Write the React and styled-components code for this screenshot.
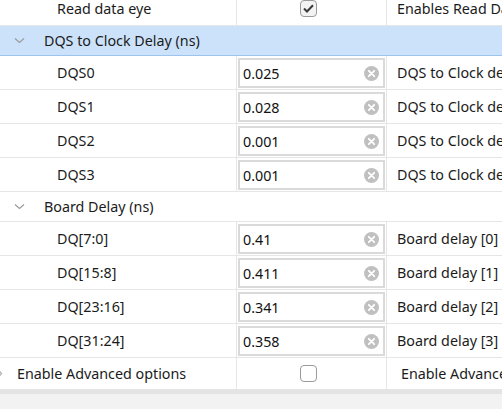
import React from 'react'
import styled, {createGlobalStyle} from 'styled-components'

const GlobalStyle = createGlobalStyle`
  html, body {
    margin: 0;
    padding: 0;
    background: #ffffff;
  }
  body {
    font-family: "Noto Sans", "Open Sans", sans-serif;
    font-size: 14.3px;
    color: #1b1b1b;
  }
`

const Page = styled.div`
  display: flex;
  flex-direction: column;
  width: 502px;
  height: 409px;
  overflow: hidden;
`

const Viewport = styled.div`
  height: 389px;
  overflow: hidden;
  flex: none;
`

const Table = styled.div`
  display: flex;
  flex-direction: column;
  margin-top: -8px;
  width: 560px;
`

const Row = styled.div`
  display: grid;
  grid-template-columns: 237px 150px 1fr;
  height: ${props => props.tall ? '34px' : '31px'};
  box-sizing: border-box;
  border-bottom: ${props => props.last ? 'none' : '1px solid #e6e6e6'};
`

const GroupRow = styled.div`
  display: flex;
  align-items: center;
  height: 30px;
  box-sizing: border-box;
  padding-left: 14px;
  gap: 19px;
  background: ${props => props.selected ? '#cce2fa' : '#ffffff'};
  border-bottom: 1px solid ${props => props.selected ? '#9dc4ef' : '#e6e6e6'};
`

const Cell = styled.div`
  display: flex;
  align-items: center;
  box-sizing: border-box;
  min-width: 0;
  white-space: nowrap;
  overflow: hidden;
  border-right: ${props => props.divider ? '1px solid #e6e6e6' : 'none'};
  padding-left: ${props => props.indent || 0}px;
  justify-content: ${props => props.center ? 'center' : 'flex-start'};
`

const ValueCell = styled(Cell)`
  padding: 2px 1px 1px 1px;
  align-items: stretch;
`

const InputBox = styled.div`
  flex: 1;
  display: flex;
  align-items: center;
  justify-content: space-between;
  box-sizing: border-box;
  border: 2px solid #dadada;
  background: #ffffff;
  padding: 0 4px 0 3px;
`

const InputText = styled.span`
  color: #111111;
`

const CheckBox = styled.div`
  width: 17px;
  height: 17px;
  box-sizing: border-box;
  border: 1.5px solid #9a9a9a;
  border-radius: 4px;
  background: ${props => props.checked ? '#f3f3f3' : '#ffffff'};
  display: flex;
  align-items: center;
  justify-content: center;
  margin-right: 6px;
`

const ChevronWrap = styled.span`
  display: flex;
  width: 11px;
  margin-left: ${props => props.offset || 0}px;
`

const Chevron = ({dir = 'down', offset}) => (
  <ChevronWrap offset={offset}>
    {dir === 'down' ? (
      <svg width="11" height="7" viewBox="0 0 11 7">
        <path d="M1 1.5 L5.5 5.5 L10 1.5" fill="none" stroke="#9b9b9b" strokeWidth="1.2" />
      </svg>
    ) : (
      <svg width="7" height="11" viewBox="0 0 7 11">
        <path d="M1.5 1 L5.5 5.5 L1.5 10" fill="none" stroke="#b5b5b5" strokeWidth="1.4" />
      </svg>
    )}
  </ChevronWrap>
)

const ClearIcon = () => (
  <svg width="15" height="15" viewBox="0 0 15 15">
    <circle cx="7.5" cy="7.5" r="7.5" fill="#c0c0c0" />
    <path d="M4.8 4.8 L10.2 10.2 M10.2 4.8 L4.8 10.2" stroke="#ffffff" strokeWidth="1.8" strokeLinecap="round" />
  </svg>
)

const Check = () => (
  <svg width="11" height="9" viewBox="0 0 11 9">
    <path d="M1 4.5 L4 7.5 L10 1.2" fill="none" stroke="#3a3a3a" strokeWidth="2" />
  </svg>
)

const Footer = styled.div`
  flex: 1;
  background: #f2f2f2;
  border-top: 5px solid #e4e4e4;
`

const AdvancedLabel = styled.span`
  margin-left: 10px;
`

const dqs = [
  ['DQS0', '0.025'],
  ['DQS1', '0.028'],
  ['DQS2', '0.001'],
  ['DQS3', '0.001'],
]

const board = [
  ['DQ[7:0]', '0.41', 'Board delay [0]'],
  ['DQ[15:8]', '0.411', 'Board delay [1]'],
  ['DQ[23:16]', '0.341', 'Board delay [2]'],
  ['DQ[31:24]', '0.358', 'Board delay [3]'],
]

const ValueRow = ({name, value, desc}) => (
  <Row tall>
    <Cell divider indent={57}>{name}</Cell>
    <ValueCell divider>
      <InputBox>
        <InputText>{value}</InputText>
        <ClearIcon />
      </InputBox>
    </ValueCell>
    <Cell indent={10}>{desc}</Cell>
  </Row>
)

export default function App () {
  return (
    <Page>
      <GlobalStyle />
      <Viewport>
        <Table>
          <Row tall>
            <Cell divider indent={57}>Read data eye</Cell>
            <Cell divider center><CheckBox checked><Check /></CheckBox></Cell>
            <Cell indent={10}>Enables Read Data Eye</Cell>
          </Row>
          <GroupRow selected>
            <Chevron />
            DQS to Clock Delay (ns)
          </GroupRow>
          {dqs.map(([name, value]) => (
            <ValueRow key={name} name={name} value={value} desc="DQS to Clock delay" />
          ))}
          <GroupRow>
            <Chevron />
            Board Delay (ns)
          </GroupRow>
          {board.map(([name, value, desc]) => (
            <ValueRow key={name} name={name} value={value} desc={desc} />
          ))}
          <Row last>
            <Cell divider>
              <Chevron dir="right" offset={-4} />
              <AdvancedLabel>Enable Advanced options</AdvancedLabel>
            </Cell>
            <Cell divider center><CheckBox /></Cell>
            <Cell indent={14}>Enable Advanced options</Cell>
          </Row>
        </Table>
      </Viewport>
      <Footer />
    </Page>
  )
}
